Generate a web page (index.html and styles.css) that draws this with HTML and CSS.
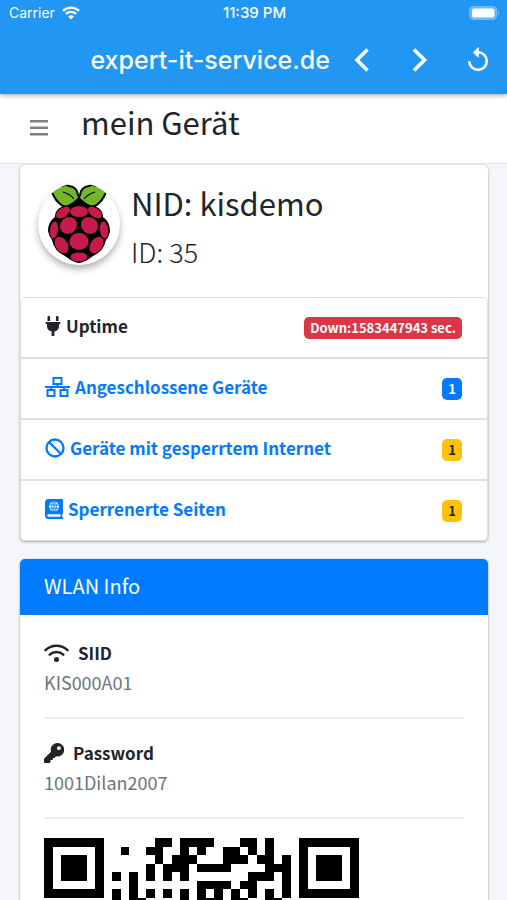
FILE: index.html
```html
<!DOCTYPE html>
<html lang="de">
<head>
<meta charset="UTF-8">
<meta name="viewport" content="width=device-width, initial-scale=1.0">
<title>mein Gerät</title>
<link rel="stylesheet" href="styles.css">
</head>
<body>
<header class="app-bar">
    <div class="status-bar">
        <div class="carrier">
            <span>Carrier</span>
            <svg width="18" height="14" viewBox="0 0 18 14" fill="none" stroke="#fff" stroke-width="2.4">
                <path d="M1 4.8a11.6 11.6 0 0 1 16 0M3.9 7.9a7.4 7.4 0 0 1 10.2 0"/>
                <path d="M9 13.6L6 10.6a4.3 4.3 0 0 1 6 0z" fill="#fff" stroke="none"/>
            </svg>
        </div>
        <span class="clock">11:39 PM</span>
        <div class="battery">
            <svg width="31" height="14" viewBox="0 0 31 14">
                <rect x="0.6" y="0.6" width="27" height="12.8" rx="4" fill="#64b5f6" stroke="#7cc0f8"/>
                <rect x="3" y="2.6" width="22.5" height="8.8" rx="2" fill="#fff"/>
                <path d="M28.8 4.5q2 2.5 0 5z" fill="#90caf9"/>
            </svg>
        </div>
    </div>
    <div class="nav-bar">
        <span class="site">expert-it-service.de</span>
        <div class="nav-actions">
            <button type="button" aria-label="Zurück">
                <svg width="24" height="28" viewBox="0 0 24 28" fill="none" stroke="#fff" stroke-width="3.6"><path d="M17.500 3.500L7 14l10.500 10.500"/></svg>
            </button>
            <button type="button" aria-label="Vor">
                <svg width="24" height="28" viewBox="0 0 24 28" fill="none" stroke="#fff" stroke-width="3.6"><path d="M6 3.500L16.500 14 6 24.500"/></svg>
            </button>
            <button type="button" aria-label="Neu laden">
                <svg width="24" height="28" viewBox="0 0 24 28"><path d="M12 6.300a8.800 8.800 0 1 1-8.800 8.900" fill="none" stroke="#fff" stroke-width="2.600"/><path d="M12.800 .8v11.200L6.800 6.400z" fill="#fff"/></svg>
            </button>
        </div>
    </div>
</header>

<div class="page-header">
    <button type="button" class="menu-button" aria-label="Menü">
        <svg width="18" height="18" viewBox="0 0 18 18" fill="#808080"><path d="M0 1h18v2.500H0zM0 7.500h18V10H0zM0 14h18v2.500H0z"/></svg>
    </button>
    <h1>mein Gerät</h1>
</div>

<main class="content">
    <section class="card">
        <div class="device">
            <div class="avatar">
                <svg width="82" height="82" viewBox="0 0 82 82">
                    <!-- Blätter -->
                    <g fill="#75b52a" stroke="#000" stroke-width="2">
                        <path d="M40 22C36 25 27 26 21 20 16 16 16 12 13 8Q18 3 24 3 28 1 31 3 39 4 40 12 43 17 40 22z"/>
                        <path d="M42 22C46 25 55 26 61 20 66 16 66 12 69 8Q64 3 58 3 54 1 51 3 43 4 42 12 39 17 42 22z"/>
                        <path d="M25 9Q32 11 36 16M57 9Q50 11 46 16" fill="none" stroke-width="1.200"/>
                    </g>
                    <!-- Frucht -->
                    <path d="M41 14Q47 20 52 22 65 24 65 34 72 39 72 48 71 54 68 57 66 68 55 73 46 80 41 80 36 80 27 73 16 68 14 57 11 53 10 48 10 39 17 34 17 24 30 22 36 19 41 14z"/>
                    <g fill="#c51a4a">
                        <ellipse cx="41" cy="28.500" rx="9" ry="5.500"/>
                        <ellipse cx="25" cy="29.500" rx="8" ry="4.500" transform="rotate(-35 25 29.500)"/>
                        <ellipse cx="57" cy="29.500" rx="8" ry="4.500" transform="rotate(35 57 29.500)"/>
                        <ellipse cx="30.500" cy="42.500" rx="9" ry="8" transform="rotate(-45 30.500 42.500)"/>
                        <ellipse cx="51.500" cy="42.500" rx="9" ry="8" transform="rotate(45 51.500 42.500)"/>
                        <ellipse cx="16" cy="47" rx="4" ry="8.500" transform="rotate(7 16 47)"/>
                        <ellipse cx="66" cy="47" rx="4" ry="8.500" transform="rotate(-7 66 47)"/>
                        <ellipse cx="41" cy="58.500" rx="9.500" ry="8.500"/>
                        <ellipse cx="23.500" cy="62" rx="6" ry="9" transform="rotate(-33 23.500 62)"/>
                        <ellipse cx="58.500" cy="62" rx="6" ry="9" transform="rotate(33 58.500 62)"/>
                        <ellipse cx="41" cy="74" rx="8.500" ry="4.500"/>
                    </g>
                </svg>
            </div>
            <div>
                <h2>NID: kisdemo</h2>
                <p class="device-id">ID: 35</p>
            </div>
        </div>
        <ul class="status-list">
            <li>
                <span class="label">
                    <svg width="16" height="20" viewBox="0 0 16 20" fill="#212529"><path d="M2.500 1.200a1.300 1.300 0 0 1 2.600 0V5H2.500zM10.900 1.200a1.300 1.300 0 0 1 2.600 0V5h-2.600zM.7 6h14.600v2H14v2q0 4.500-4.600 5.500V20H6.600v-4.500Q2 14.500 2 10V8H.7z"/></svg>
                    Uptime
                </span>
                <span class="badge danger">Down:1583447943 sec.</span>
            </li>
            <li>
                <a class="label" href="#">
                    <svg width="25" height="20" viewBox="0 0 25 20" fill="none" stroke="#007bff" stroke-width="2"><rect x="8.500" y="1" width="8" height="6"/><rect x="2.500" y="13" width="7" height="6"/><rect x="15.500" y="13" width="7" height="6"/><path d="M0 10h25M12.500 7v3M6 10v3M19 10v3"/></svg>
                    Angeschlossene Geräte
                </a>
                <span class="badge primary">1</span>
            </li>
            <li>
                <a class="label" href="#">
                    <svg width="20" height="20" viewBox="0 0 20 20" fill="none" stroke="#007bff" stroke-width="2.300"><circle cx="10" cy="10" r="8.500"/><path d="M4 4l12 12"/></svg>
                    Geräte mit gesperrtem Internet
                </a>
                <span class="badge warning">1</span>
            </li>
            <li>
                <a class="label" href="#">
                    <svg width="18" height="20" viewBox="0 0 18 20"><path d="M3.500 0H17q1 0 1 1v13q0 .8-.7 1v3h.7v2H3.500Q0 20 0 16.500v-13Q0 0 3.500 0z" fill="#007bff"/><path d="M3.500 15.300h12v2.400h-12a1.200 1.200 0 0 1 0-2.400z" fill="#fff"/><circle cx="9" cy="7.500" r="5" fill="#fff"/><path d="M4 6h10M4 9.200h10M9 2.500v10" stroke="#007bff" stroke-width=".9"/><ellipse cx="9" cy="7.500" rx="2.300" ry="5" fill="none" stroke="#007bff" stroke-width=".9"/></svg>
                    Sperrenerte Seiten
                </a>
                <span class="badge warning">1</span>
            </li>
        </ul>
    </section>

    <section class="card">
        <h3 class="card-header">WLAN Info</h3>
        <div class="card-body">
            <div class="info">
                <strong>
                    <svg width="25" height="20" viewBox="0 0 25 20" fill="none" stroke="#212529" stroke-width="2.500" stroke-linecap="round"><path d="M1.500 7.200a16 16 0 0 1 22 0M5.700 11.600a10 10 0 0 1 13.600 0"/><circle cx="12.500" cy="16.500" r="2.500" fill="#212529" stroke="none"/></svg>
                    SIID
                </strong>
                <p>KIS000A01</p>
            </div>
            <div class="info">
                <strong>
                    <svg width="20" height="20" viewBox="0 0 20 20"><path d="M13.300 0a6.700 6.700 0 1 1-1.400 13.200L10.500 15H8.800v2H6.500v2.100l-.9.900H1q-1 0-1-1v-3.300l7-7A6.700 6.700 0 0 1 13.300 0zm1.600 3.300a1.900 1.900 0 1 0 0 3.800 1.900 1.900 0 0 0 0-3.800z" fill="#212529" fill-rule="evenodd"/></svg>
                    Password
                </strong>
                <p>1001Dilan2007</p>
            </div>
            <svg class="qr" viewBox="0 0 37 8" shape-rendering="crispEdges">
                <path d="M0 0h7v7H0zM1 1v5h5V1zM2 2h3v3H2zM30 0h7v7h-7zM31 1v5h5V1zM32 2h3v3h-3z" fill-rule="evenodd"/>
                <path d="M13 0h2v1h-2zM16 0h4v1h-4zM23 0h2v1h-2zM26 0h1v1h-1z
                    M9 1h1v1h-1zM12 1h2v1h-2zM16 1h1v1h-1zM18 1h1v1h-1zM21 1h2v1h-2zM24 1h1v1h-1zM26 1h1v1h-1z
                    M13 2h1v1h-1zM15 2h3v1h-3zM21 2h3v1h-3zM25 2h2v1h-2zM28 2h1v1h-1z
                    M12 3h1v1h-1zM14 3h3v1h-3zM18 3h4v1h-4zM26 3h3v1h-3z
                    M8 4h1v1h-1zM10 4h1v1h-1zM12 4h1v1h-1zM14 4h1v1h-1zM16 4h1v1h-1zM24 4h3v1h-3zM28 4h1v1h-1z
                    M10 5h1v1h-1zM18 5h4v1h-4zM23 5h2v1h-2zM28 5h1v1h-1z
                    M8 6h1v1h-1zM10 6h1v1h-1zM12 6h1v1h-1zM14 6h1v1h-1zM16 6h1v1h-1zM18 6h1v1h-1zM20 6h1v1h-1zM22 6h1v1h-1zM24 6h1v1h-1zM26 6h1v1h-1zM28 6h1v1h-1z
                    M8 7h1v1h-1zM10 7h2v1h-2zM16 7h1v1h-1zM18 7h3v1h-3zM22 7h2v1h-2zM26 7h2v1h-2z"/>
            </svg>
        </div>
    </section>
</main>
</body>
</html>
```
FILE: styles.css
```css
* {
    box-sizing: border-box;
}
body {
    margin: 0;
    height: 100vh;
    overflow: hidden;
    display: flex;
    flex-direction: column;
    background-color: #f4f6f9;
    color: #212529;
    font-family: "Noto Sans CJK SC", "Open Sans", sans-serif;
    font-size: 17px;
    line-height: 30px;
}
h1, h2, h3, p, ul {
    margin: 0;
    padding: 0;
    font-weight: 400;
}
svg {
    display: block;
    flex-shrink: 0;
}
button {
    display: block;
    padding: 0;
    border: none;
    background: none;
    cursor: pointer;
}
a {
    color: #007bff;
    text-decoration: none;
}
.app-bar {
    flex-shrink: 0;
    height: 94px;
    background-color: #2196f3;
    color: #fff;
    font-family: Inter, sans-serif;
    box-shadow: 0 1px 5px rgba(0, 0, 0, 0.4);
    z-index: 1;
}
.status-bar {
    display: grid;
    grid-template-columns: 1fr auto 1fr;
    align-items: center;
    height: 26px;
    padding: 0 7px 0 9px;
    font-size: 14px;
    line-height: 26px;
}
.carrier {
    display: flex;
    align-items: center;
    gap: 7px;
}
.clock {
    font-size: 15px;
    font-weight: 500;
}
.battery {
    justify-self: end;
}
.nav-bar {
    display: flex;
    align-items: center;
    justify-content: flex-end;
    gap: 20px;
    height: 68px;
    padding: 0 17px;
}
.site {
    font-size: 25px;
    font-weight: 500;
}
.nav-actions {
    display: flex;
    gap: 34px;
}
.page-header {
    flex-shrink: 0;
    display: flex;
    align-items: center;
    gap: 33px;
    height: 70px;
    padding: 0 30px 2px;
    background-color: #fff;
    border-bottom: 1px solid #dee2e6;
}
h1 {
    padding-bottom: 12px;
    font-size: 31px;
    line-height: 40px;
}
.content {
    flex: 1;
    min-height: 0;
    overflow: hidden;
    padding: 1px 19px 0 20px;
}
.card {
    margin-bottom: 18px;
    background-color: #fff;
    border-radius: 5px;
    box-shadow: 0 0 1px rgba(0, 0, 0, 0.2), 0 1px 3px rgba(0, 0, 0, 0.3);
}
.device {
    display: flex;
    gap: 11px;
    height: 132px;
    padding: 18px;
}
.avatar {
    width: 82px;
    height: 82px;
    border-radius: 50%;
    overflow: hidden;
    box-shadow: 0 4px 7px rgba(0, 0, 0, 0.3);
}
h2 {
    font-size: 31px;
    line-height: 40px;
}
.device-id {
    font-size: 27px;
    font-weight: 300;
    line-height: 58px;
}
.status-list {
    list-style: none;
    border: 1px solid #dfdfdf;
    border-radius: 5px;
}
.status-list li {
    display: flex;
    align-items: center;
    justify-content: space-between;
    height: 61px;
    padding: 0 25px 0 24px;
    border-bottom: 2px solid #dfdfdf;
}
.status-list li:last-child {
    height: 59px;
    border-bottom: none;
}
.label {
    display: flex;
    align-items: center;
    gap: 5px;
    padding-bottom: 3px;
    font-weight: 700;
}
.badge {
    padding: 0 6px;
    border-radius: 5px;
    font-size: 13px;
    font-weight: 700;
    line-height: 22px;
}
.danger {
    background-color: #dc3545;
    color: #fff;
}
.primary {
    background-color: #007bff;
    color: #fff;
}
.warning {
    background-color: #ffc107;
    color: #212529;
}
.card-header {
    padding: 12px 24px 14px;
    border-radius: 5px 5px 0 0;
    background-color: #007bff;
    color: #fff;
    font-size: 20px;
}
.card-body {
    padding: 23px 24px;
}
.info {
    padding-bottom: 20px;
    margin-bottom: 19px;
    border-bottom: 2px solid #efefef;
}
.info strong {
    display: flex;
    align-items: center;
    gap: 9px;
}
.info p {
    color: #6c757d;
    font-size: 18px;
    line-height: 29px;
}
.qr {
    width: 75%;
}
```
